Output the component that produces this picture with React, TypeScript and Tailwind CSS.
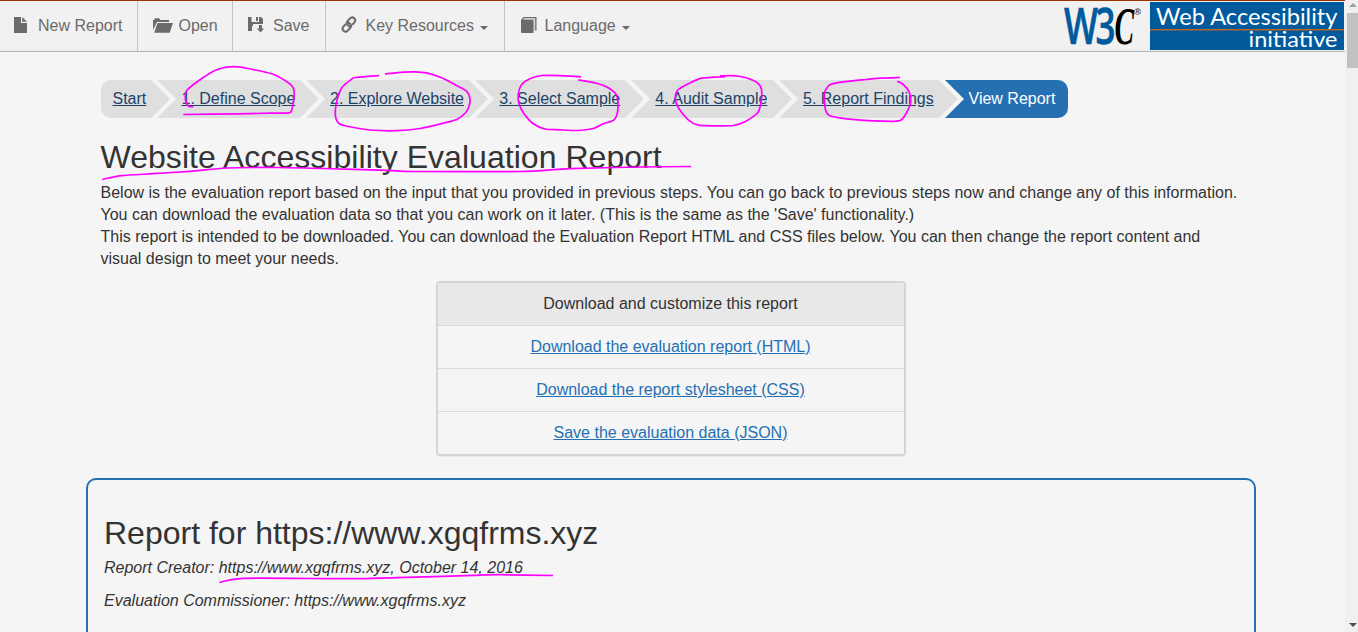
import React from "react";

type Point = [number, number];

/* Hand-drawn pen strokes, as lists of points on the page. */
const strokes: Point[][] = [
  [[193.3, 106.7], [189, 106.500], [186, 102.200], [185.3, 95.500], [186.7, 90.500], [200, 79.8], [215, 70.500], [226.7, 67.2], [238, 66.8], [253, 69.500], [271.7, 73.8], [285, 80.500], [292.3, 86.2], [294, 90.500], [293.7, 100.500], [291.7, 109.8], [289.3, 112.8], [270, 113.2], [236.7, 113.8], [183.3, 114.5]],
  [[379.3, 75.500], [355, 77.500], [351.7, 79.2], [342.7, 86.500], [337.7, 97.2], [335.3, 110.500], [336, 118.8], [339.3, 123.8], [348.3, 126.500], [370, 130], [396.7, 130.7], [420, 128.500], [443.3, 123.2], [456.7, 119.500], [466, 112.2], [469.3, 105.500], [470, 98.8], [466.7, 91.2], [456.7, 85.500], [441.7, 77.8], [426.7, 72.8], [415, 71.8], [403.3, 72.2], [385, 74]],
  [[581, 76.8], [565, 75.8], [541.7, 75.500], [530, 78.8], [521.7, 84.500], [518.3, 93.8], [519, 103.8], [524, 113.8], [533.3, 123.8], [545, 129], [560, 129.8], [578.3, 130.5], [593.3, 128.5], [603.3, 123.8], [613.3, 120.500], [616.7, 115.500], [618, 107.2], [616.7, 95.500], [608.3, 87.8], [596.7, 83.2], [578.3, 79.8]],
  [[725, 76.8], [701.7, 78.2], [688.3, 83.8], [677.3, 90.500], [675.3, 98.8], [679, 108.8], [688.3, 119.8], [698.3, 125.2], [716.7, 125.8], [733.3, 125.500], [745, 121.8], [757.7, 112.8], [761.3, 100.500], [761.3, 88.8], [756.7, 82.2], [745, 77.500], [735, 75.8], [720, 75.8]],
  [[900, 77.500], [880, 78.2], [863.3, 79.8], [836.7, 82.8], [829.3, 85.2], [824.7, 92.2], [824.7, 103.8], [825.7, 110.500], [829.3, 115.500], [846.7, 118.8], [883.3, 121.2], [900, 120.6], [906, 113.8], [910.7, 102.2], [909.3, 92.2], [903.3, 84.500], [897.3, 81.2]],
  [[102.3, 179.3], [121.7, 175.7], [153.3, 173.7], [190, 171.3], [226.7, 168], [276.7, 167.500], [323.3, 168.500], [386.7, 170.3], [413.3, 171.500], [520, 171.500], [570, 168.7], [640, 167], [691, 166.500]],
  [[219.5, 582.5], [243.3, 578.3], [346.7, 578.7], [396.7, 577.7], [473.3, 575.3], [500, 574.7], [553, 575.500]],
];

function smooth(points: Point[]): string {
  let d = `M${points[0][0]} ${points[0][1]}`;
  for (let i = 0; i < points.length - 1; i++) {
    const a = points[Math.max(i - 1, 0)];
    const b = points[i];
    const c = points[i + 1];
    const e = points[Math.min(i + 2, points.length - 1)];
    const k = 9;
    d += `C${b[0] + (c[0] - a[0]) / k} ${b[1] + (c[1] - a[1]) / k} ${c[0] - (e[0] - b[0]) / k} ${c[1] - (e[1] - b[1]) / k} ${c[0]} ${c[1]}`;
  }
  return d;
}

function PenMarks() {
  return (
    <svg className="pointer-events-none absolute top-0 left-0" width="1358" height="632" fill="none" stroke="#ff00ff" strokeWidth="1.7" strokeLinejoin="round">
      {strokes.map((s, i) => (
        <path key={i} d={smooth(s)} />
      ))}
    </svg>
  );
}

function FileIcon() {
  return (
    <svg className="-mt-[3px]" width="13" height="16" viewBox="0 0 13 16" fill="currentColor">
      <path d="M.5 0H7v6h6v9.5a.5.5 0 0 1-.5.5H.5a.5.5 0 0 1-.5-.5V.5A.5.5 0 0 1 .5 0ZM8.2 0 13 4.8H8.2Z" />
    </svg>
  );
}

function FolderIcon() {
  return (
    <svg className="-mt-[2px]" width="20" height="15" viewBox="0 0 20 15" fill="currentColor">
      <path d="M0 12V2h1L2 .3h4.2L7.3 2H16v2H4Z" />
      <path d="M4.4 5H20l-3.2 9.2a.8.8 0 0 1-.8.6H1.2Z" />
    </svg>
  );
}

function SaveIcon() {
  return (
    <svg className="-mt-[3px]" width="17" height="17" viewBox="0 0 17 17" fill="currentColor">
      <path d="M0 1h3.500v5h7.500V1h2l2 2v5H5v2H4v5H0Z" />
      <path d="M8 1h2v4H8Z" />
      <path d="M11 9h3v3.400h2.200L12.500 16.500l-3.700-4.100H11Z" />
    </svg>
  );
}

function LinkIcon() {
  return (
    <svg className="-mt-[3px]" width="16" height="17" viewBox="0 0 16 17" fill="none" stroke="currentColor" strokeWidth="2.100">
      <path d="M9.300 10.400C6.300 9.800 4.700 7.500 6.300 5.500L9 2.400c1.200-1.300 2.900-1.300 4.200-.2 1.300 1.200 1.300 2.800.2 4.200l-2.200 2.500" />
      <path d="M6.500 6.600c3 .6 4.600 2.900 3 4.900l-2.700 3.100c-1.200 1.300-2.900 1.300-4.200.2-1.300-1.200-1.300-2.800-.2-4.200l2.200-2.500" />
    </svg>
  );
}

function BookIcon() {
  return (
    <svg className="-mt-[3px]" width="16" height="16" viewBox="0 0 16 16" fill="currentColor">
      <path d="M0 3h12v13H1a1 1 0 0 1-1-1Z" />
      <path d="M0 3 2.600 0H15.500v13.500H14.200V1.300H3.200L2 2.600h10.500V16h-1V3Z" />
      <path d="M12.500 2.800 14 1.300v12l-1.500 1.500Z" opacity=".25" />
    </svg>
  );
}

function Caret() {
  return <span className="mt-[3px] ml-[6px] border-x-4 border-t-4 border-x-transparent border-t-[#6b6b6b]" />;
}

function Logo() {
  return (
    <svg className="overflow-visible" width="281" height="48" viewBox="0 0 281 48">
      <g transform="translate(1 42) scale(1 1.48)">
        <text x="0" y="0" fontFamily="'Open Sans', sans-serif" fontWeight="600" fontSize="34.500" fill="#005a9c" stroke="#005a9c" strokeWidth="0.400" textLength="34" lengthAdjust="spacingAndGlyphs">W</text>
        <text x="31.500" y="0" fontFamily="'Open Sans', sans-serif" fontWeight="600" fontSize="34.500" fill="#005a9c" stroke="#005a9c" strokeWidth="0.400" textLength="20" lengthAdjust="spacingAndGlyphs">3</text>
        <text x="50.500" y="0" fontFamily="'Liberation Serif', serif" fontWeight="700" fontStyle="italic" fontSize="36" fill="#000" textLength="19.500" lengthAdjust="spacingAndGlyphs">C</text>
      </g>
      <text x="71" y="13" fontFamily="'Liberation Sans', sans-serif" fontWeight="700" fontSize="9.500" fill="#444">®</text>
      <rect x="87" y="0" width="194" height="48" fill="#005a9c" />
      <rect x="87" y="27" width="194" height="1" fill="#c0671f" />
      <rect x="87" y="28" width="194" height="1" fill="#5d5c62" />
      <g fontFamily="Lato, sans-serif" fill="#fff">
        <text x="93" y="23" fontSize="22.500" textLength="181.500" lengthAdjust="spacingAndGlyphs">Web Accessibility</text>
        <text x="185.500" y="45" fontSize="22" textLength="89" lengthAdjust="spacingAndGlyphs">initiative</text>
      </g>
    </svg>
  );
}

function Toolbar() {
  return (
    <header className="flex h-[52px] items-stretch border-t border-b border-t-[#993300] border-b-[#b3b3b3] bg-[#f1f1f1] text-[#6b6b6b]">
      <nav className="flex">
        <a className="flex w-[138px] items-center border-r border-[#c4c4c4] pl-[14px]"><FileIcon /><span className="ml-[11px]">New Report</span></a>
        <a className="flex w-[95px] items-center border-r border-[#c4c4c4] pl-[15px]"><FolderIcon /><span className="ml-[5.5px]">Open</span></a>
        <a className="flex w-[93px] items-center border-r border-[#c4c4c4] pl-[15px]"><SaveIcon /><span className="ml-[8px]">Save</span></a>
        <a className="flex w-[179px] items-center border-r border-[#c4c4c4] pl-[15px]"><LinkIcon /><span className="ml-[8.5px]">Key Resources</span><Caret /></a>
        <a className="flex items-center pl-[16px]"><BookIcon /><span className="ml-[7.5px]">Language</span><Caret /></a>
      </nav>
      <div className="mr-px ml-auto pt-px"><Logo /></div>
    </header>
  );
}

const steps = [
  { label: "1. Define Scope", size: "w-[162px] pl-[24.5px]" },
  { label: "2. Explore Website", size: "w-[182px] pl-[24px]" },
  { label: "3. Select Sample", size: "w-[169px] pl-[24.3px]" },
  { label: "4. Audit Sample", size: "w-[161px] pl-[24.3px]" },
  { label: "5. Report Findings", size: "w-[179px] pl-[24px]" },
];

function Steps() {
  return (
    <ol className="flex h-[38px] leading-[37px] whitespace-nowrap text-[#1b4469]">
      <li className="w-[69px] rounded-l-[10px] bg-[#dfdfdf] pl-[11.500px] [clip-path:polygon(0_0,50.500px_0,100%_50%,50.500px_100%,0_100%)]">
        <a className="underline">Start</a>
      </li>
      {steps.map((s) => (
        <li key={s.label} className={`-ml-[13px] bg-[#dfdfdf] [clip-path:polygon(0_0,calc(100%-19px)_0,100%_50%,calc(100%-19px)_100%,0_100%,19px_50%)] ${s.size}`}>
          <a className="underline">{s.label}</a>
        </li>
      ))}
      <li className="-ml-[13px] w-[123px] rounded-r-[10px] bg-[#2570b3] pl-[23.5px] text-white [clip-path:polygon(0_0,100%_0,100%_100%,0_100%,19px_50%)]">View Report</li>
    </ol>
  );
}

function Downloads() {
  return (
    <section className="mt-[11px] ml-[335px] w-[470px] rounded-[4px] border-2 border-[#d5d5d5] text-center shadow-[0_1px_1px_rgba(0,0,0,0.05)]">
      <h2 className="h-[42px] bg-[#e8e8e8] pr-px leading-[41px]">Download and customize this report</h2>
      {["Download the evaluation report (HTML)", "Download the report stylesheet (CSS)", "Save the evaluation data (JSON)"].map((t) => (
        <div key={t} className="h-[43px] border-t border-[#dadada] pr-px leading-[41px] text-[#2570b3]">
          <a className="underline">{t}</a>
        </div>
      ))}
    </section>
  );
}

function Scrollbar() {
  return (
    <aside className="flex h-[632px] w-[13px] flex-col items-end bg-[#f0f0f0]">
      <span className="mt-[3px] mr-px border-x-4 border-b-4 border-x-transparent border-b-[#a0a0a0]" />
      <div className="mt-[6px] h-[55px] w-[11px] bg-[#c1c1c1]" />
      <span className="mt-auto mr-px mb-[5px] border-x-4 border-t-4 border-x-transparent border-t-[#505050]" />
    </aside>
  );
}

export default function App() {
  return (
    <div className="relative flex h-[632px] w-[1358px] overflow-hidden bg-[#f5f5f5] font-['Liberation_Sans',Arial,sans-serif] text-base leading-[22px] text-[#333]">
      <div className="w-[1345px]">
        <Toolbar />
        <main className="pt-[28px] pl-[101px]">
          <Steps />
          <h1 className="mt-[21px] -ml-[0.5px] h-[43px] text-[32px] leading-[36px] tracking-[0.04px]">Website Accessibility Evaluation Report</h1>
          <p className="-ml-[0.5px] whitespace-nowrap">
            Below is the evaluation report based on the input that you provided in previous steps. You can go back to previous steps now and change any of this information.
            <br />
            You can download the evaluation data so that you can work on it later. (This is the same as the 'Save' functionality.)
          </p>
          <p className="-ml-[0.5px] whitespace-nowrap">
            This report is intended to be downloaded. You can download the Evaluation Report HTML and CSS files below. You can then change the report content and
            <br />
            visual design to meet your needs.
          </p>
          <Downloads />
          <article className="mt-[22px] -ml-[15px] h-[200px] w-[1170px] rounded-[10px] border-2 border-[#2570b3] pt-[35px] pl-4">
            <h1 className="text-[32px] leading-[36px]">Report for https://www.xgqfrms.xyz</h1>
            <p className="mt-[6px] italic">Report Creator: https://www.xgqfrms.xyz, October 14, 2016</p>
            <p className="mt-[11px] italic">Evaluation Commissioner: https://www.xgqfrms.xyz</p>
          </article>
        </main>
      </div>
      <Scrollbar />
      <PenMarks />
    </div>
  );
}
